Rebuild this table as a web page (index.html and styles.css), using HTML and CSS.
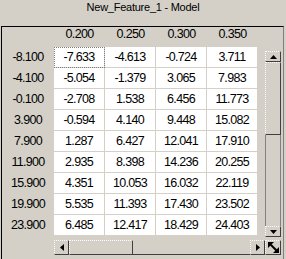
FILE: index.html
```html
<!DOCTYPE html>
<html>
<head>
<meta charset="utf-8">
<link rel="stylesheet" href="styles.css">
</head>
<body>
<div class="title">New_Feature_1 - Model</div>
<div class="frame">
  <div class="table">
    <div class="h"></div><div class="h">0.200</div><div class="h">0.250</div><div class="h">0.300</div><div class="h">0.350</div>
    <div class="lbl">-8.100</div><div class="c focus">-7.633</div><div class="c">-4.613</div><div class="c">-0.724</div><div class="c">3.711</div>
    <div class="lbl">-4.100</div><div class="c">-5.054</div><div class="c">-1.379</div><div class="c">3.065</div><div class="c">7.983</div>
    <div class="lbl">-0.100</div><div class="c">-2.708</div><div class="c">1.538</div><div class="c">6.456</div><div class="c">11.773</div>
    <div class="lbl">3.900</div><div class="c">-0.594</div><div class="c">4.140</div><div class="c">9.448</div><div class="c">15.082</div>
    <div class="lbl">7.900</div><div class="c">1.287</div><div class="c">6.427</div><div class="c">12.041</div><div class="c">17.910</div>
    <div class="lbl">11.900</div><div class="c">2.935</div><div class="c">8.398</div><div class="c">14.236</div><div class="c">20.255</div>
    <div class="lbl">15.900</div><div class="c">4.351</div><div class="c">10.053</div><div class="c">16.032</div><div class="c">22.119</div>
    <div class="lbl">19.900</div><div class="c">5.535</div><div class="c">11.393</div><div class="c">17.430</div><div class="c">23.502</div>
    <div class="lbl">23.900</div><div class="c">6.485</div><div class="c">12.417</div><div class="c">18.429</div><div class="c">24.403</div>
  </div>
  <div class="vscroll">
    <div class="btn vbtn"><svg width="7" height="4" viewBox="0 0 7 4"><polygon points="0,4 7,4 3.5,0" fill="#000"/></svg></div>
    <div class="btn vthumb"></div>
    <div class="vtrack"></div>
    <div class="btn vbtn"><svg width="7" height="4" viewBox="0 0 7 4"><polygon points="0,0 7,0 3.5,4" fill="#000"/></svg></div>
  </div>
  <div class="hscroll">
    <div class="btn hbtn"><svg width="4" height="7" viewBox="0 0 4 7"><polygon points="4,0 4,7 0,3.5" fill="#000"/></svg></div>
    <div class="btn hthumb"></div>
    <div class="htrack"></div>
    <div class="btn hbtn"><svg width="4" height="7" viewBox="0 0 4 7"><polygon points="0,0 0,7 4,3.5" fill="#000"/></svg></div>
  </div>
  <div class="btn grip">
    <svg width="13" height="13" viewBox="0 0 13 13">
      <line x1="3" y1="3" x2="10" y2="10" stroke="#000" stroke-width="2"/>
      <polygon points="1,1 7,1 1,7" fill="#000"/>
      <polygon points="12,12 6,12 12,6" fill="#000"/>
    </svg>
  </div>
</div>
</body>
</html>
```

FILE: styles.css
```css
html, body {
  margin: 0;
  padding: 0;
}

body {
  background: #d4d0c8;
  width: 286px;
  height: 259px;
  overflow: hidden;
  font-family: "Liberation Sans", Arial, sans-serif;
  color: #000;
}

.title {
  height: 26px;
  box-sizing: border-box;
  padding-top: 1px;
  text-align: center;
  font-size: 11px;
  line-height: 13px;
  letter-spacing: -0.25px;
}

.frame {
  box-sizing: border-box;
  margin-left: 1px;
  width: 283px;
  height: 240px;
  border-top: 1px solid #000;
  border-left: 1px solid #000;
  border-right: 1px solid #808080;
  display: grid;
  grid-template-columns: 256px 7px 16px 2px;
  grid-template-rows: 209px 4px 15px 1fr;
}

.table {
  grid-column: 1;
  grid-row: 1;
  display: grid;
  grid-template-columns: 52px repeat(4, 51px);
  grid-template-rows: 20px repeat(9, 21px);
  font-size: 12.5px;
  letter-spacing: -0.7px;
  text-align: center;
}

.h {
  line-height: 14px;
}

.lbl {
  line-height: 20px;
}

.c {
  background: #fff;
  border-right: 1px solid #d4d0c8;
  border-bottom: 1px solid #d4d0c8;
  line-height: 20px;
}

.focus {
  outline: 1px dotted #808080;
  outline-offset: -1px;
}

.btn {
  box-sizing: border-box;
  background: #d4d0c8;
  border-top: 1px dotted #fff;
  border-left: 1px dotted #fff;
  border-right: 1px solid #404040;
  border-bottom: 1px solid #404040;
  display: flex;
  align-items: center;
  justify-content: center;
}

.btn svg {
  display: block;
}

.vscroll {
  grid-column: 3;
  grid-row: 1 / 3;
  margin-top: 24px;
  height: 186px;
  display: flex;
  flex-direction: column;
}

.vbtn {
  height: 11px;
  flex: none;
}

.vthumb {
  height: 73px;
  flex: none;
}

.vtrack {
  flex: 1;
  box-sizing: border-box;
  border-left: 1px solid #808080;
  border-right: 1px solid #808080;
}

.hscroll {
  grid-column: 1 / 3;
  grid-row: 3;
  margin-left: 52px;
  display: flex;
}

.hbtn {
  width: 15px;
  flex: none;
}

.hthumb {
  width: 64px;
  flex: none;
}

.htrack {
  flex: 1;
  box-sizing: border-box;
  border-bottom: 1px solid #404040;
}

.grip {
  grid-column: 3;
  grid-row: 3;
}
```
